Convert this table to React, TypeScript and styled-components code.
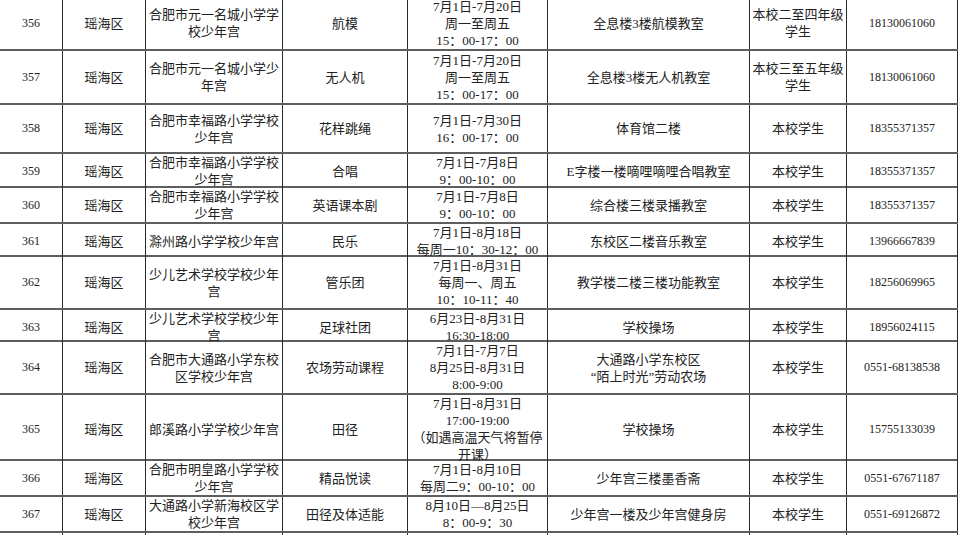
import styled, { createGlobalStyle } from "styled-components";

// ── Types ─────────────────────────────────────────────────────────────────────

interface Entry {
  no: number;
  area: string;
  school: string[];
  course: string;
  time: string[];
  place: string[];
  target: string[];
  phone: string;
  h: number;
}

// ── Data ──────────────────────────────────────────────────────────────────────

const rows: Entry[] = [
  { no: 356, area: "瑶海区", school: ["合肥市元一名城小学学", "校少年宫"], course: "航模", time: ["7月1日-7月20日", "周一至周五", "15：00-17：00"], place: ["全息楼3楼航模教室"], target: ["本校二至四年级", "学生"], phone: "18130061060", h: 54 },
  { no: 357, area: "瑶海区", school: ["合肥市元一名城小学少", "年宫"], course: "无人机", time: ["7月1日-7月20日", "周一至周五", "15：00-17：00"], place: ["全息楼3楼无人机教室"], target: ["本校三至五年级", "学生"], phone: "18130061060", h: 54 },
  { no: 358, area: "瑶海区", school: ["合肥市幸福路小学学校", "少年宫"], course: "花样跳绳", time: ["7月1日-7月30日", "16：00-17：00"], place: ["体育馆二楼"], target: ["本校学生"], phone: "18355371357", h: 49 },
  { no: 359, area: "瑶海区", school: ["合肥市幸福路小学学校", "少年宫"], course: "合唱", time: ["7月1日-7月8日", "9：00-10：00"], place: ["E字楼一楼嘀哩嘀哩合唱教室"], target: ["本校学生"], phone: "18355371357", h: 34 },
  { no: 360, area: "瑶海区", school: ["合肥市幸福路小学学校", "少年宫"], course: "英语课本剧", time: ["7月1日-7月8日", "9：00-10：00"], place: ["综合楼三楼录播教室"], target: ["本校学生"], phone: "18355371357", h: 36 },
  { no: 361, area: "瑶海区", school: ["滁州路小学学校少年宫"], course: "民乐", time: ["7月1日-8月18日", "每周一10：30-12：00"], place: ["东校区二楼音乐教室"], target: ["本校学生"], phone: "13966667839", h: 33 },
  { no: 362, area: "瑶海区", school: ["少儿艺术学校学校少年", "宫"], course: "管乐团", time: ["7月1日-8月31日", "每周一、周五", "10：10-11：40"], place: ["教学楼二楼三楼功能教室"], target: ["本校学生"], phone: "18256069965", h: 53 },
  { no: 363, area: "瑶海区", school: ["少儿艺术学校学校少年", "宫"], course: "足球社团", time: ["6月23日-8月31日", "16:30-18:00"], place: ["学校操场"], target: ["本校学生"], phone: "18956024115", h: 32 },
  { no: 364, area: "瑶海区", school: ["合肥市大通路小学东校", "区学校少年宫"], course: "农场劳动课程", time: ["7月1日-7月7日", "8月25日-8月31日", "8:00-9:00"], place: ["大通路小学东校区", "“陌上时光”劳动农场"], target: ["本校学生"], phone: "0551-68138538", h: 53 },
  { no: 365, area: "瑶海区", school: ["郎溪路小学学校少年宫"], course: "田径", time: ["7月1日-8月31日", "17:00-19:00", "（如遇高温天气将暂停", "开课）"], place: ["学校操场"], target: ["本校学生"], phone: "15755133039", h: 66 },
  { no: 366, area: "瑶海区", school: ["合肥市明皇路小学学校", "少年宫"], course: "精品悦读", time: ["7月1日-8月10日", "每周二9：00-10：00"], place: ["少年宫三楼墨香斋"], target: ["本校学生"], phone: "0551-67671187", h: 36 },
  { no: 367, area: "瑶海区", school: ["大通路小学新海校区学", "校少年宫"], course: "田径及体适能", time: ["8月10日—8月25日", "8：00-9：30"], place: ["少年宫一楼及少年宫健身房"], target: ["本校学生"], phone: "0551-69126872", h: 36 },
];

// ── Styled components ─────────────────────────────────────────────────────────

const Global = createGlobalStyle`
  html, body { margin: 0; padding: 0; background: #fff; }
  body {
    font-family: "Liberation Serif", "Noto Sans CJK SC", serif;
    color: #222;
    overflow: hidden;
  }
`;

const Sheet = styled.div`
  width: 958px;
  margin-top: -3px;
  display: flex;
  flex-direction: column;
`;

const Row = styled.div<{ $h: number }>`
  display: grid;
  grid-template-columns: 63px 83px 137px 125px 140px 202px 97px 111px;
  height: ${(p) => p.$h}px;
  border-bottom: 2px solid #5e5e5e;
  box-sizing: border-box;
`;

const Cell = styled.div<{ $num?: boolean }>`
  display: flex;
  flex-direction: column;
  align-items: center;
  justify-content: center;
  border-right: 1px solid #2a2a2a;
  box-sizing: border-box;
  font-size: ${(p) => (p.$num ? 12 : 13)}px;
  line-height: 17px;
  white-space: nowrap;
  text-align: center;
  font-weight: 400;
`;

const Line = styled.span`
  display: block;
`;

// ── Component ─────────────────────────────────────────────────────────────────

function Lines({ items }: { items: string[] }) {
  return (
    <>
      {items.map((t, i) => (
        <Line key={i}>{t}</Line>
      ))}
    </>
  );
}

export default function App() {
  return (
    <>
      <Global />
      <Sheet>
        {rows.map((r) => (
          <Row key={r.no} $h={r.h}>
            <Cell $num>{r.no}</Cell>
            <Cell>{r.area}</Cell>
            <Cell><Lines items={r.school} /></Cell>
            <Cell>{r.course}</Cell>
            <Cell><Lines items={r.time} /></Cell>
            <Cell><Lines items={r.place} /></Cell>
            <Cell><Lines items={r.target} /></Cell>
            <Cell $num>{r.phone}</Cell>
          </Row>
        ))}
        <Row $h={20}>
          {Array.from({ length: 8 }).map((_, i) => (
            <Cell key={i} />
          ))}
        </Row>
      </Sheet>
    </>
  );
}
